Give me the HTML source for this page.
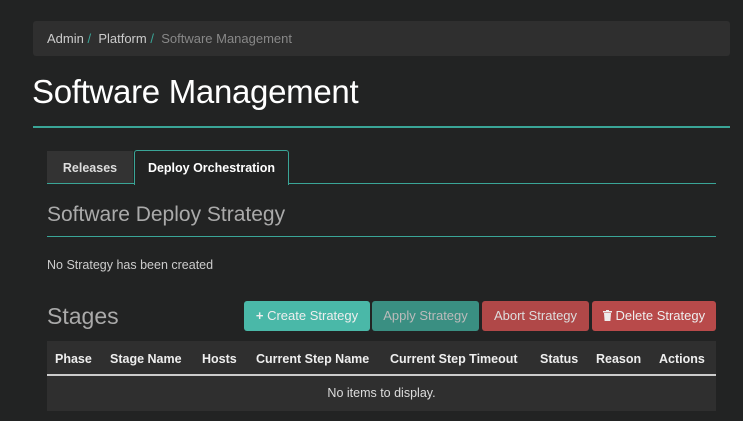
<!DOCTYPE html>
<html><head><style>
*{margin:0;padding:0;box-sizing:border-box}
body{width:743px;height:421px;background:#222323;font-family:"Liberation Sans",sans-serif;color:#ddd;position:relative;overflow:hidden}
.a{position:absolute;white-space:nowrap}
.bc{left:33px;top:21px;width:697px;height:35px;background:#2f2f2f;border-radius:3px}
.btn{position:absolute;top:301px;height:30px;border-radius:3px;font-size:13px;line-height:30px;text-align:center;color:#eee}
.h{position:absolute;top:352px;font-size:12.5px;font-weight:bold;color:#eee;white-space:nowrap}
</style></head><body>
<div class="a bc"></div>
<div class="a" style="left:47px;top:31px;font-size:13px;color:#ccc">Admin <span style="color:#3aa597">/</span>&nbsp; Platform <span style="color:#3aa597">/</span>&nbsp; <span style="color:#888">Software Management</span></div>
<div class="a" style="left:32px;top:73px;font-size:33px;color:#fff;letter-spacing:-0.3px">Software Management</div>
<div class="a" style="left:33px;top:126px;width:697px;height:2px;background:#3aa597"></div>
<div class="a" style="left:47px;top:151px;width:86px;height:32px;background:#333;font-size:12.5px;font-weight:bold;line-height:34px;text-align:center;color:#ddd">Releases</div>
<div class="a" style="left:134px;top:150px;width:155px;height:35px;background:#222323;border:1px solid #3aa597;border-bottom:none;border-radius:3px 3px 0 0;font-size:12.5px;font-weight:bold;line-height:35px;text-align:center;color:#fff">Deploy Orchestration</div>
<div class="a" style="left:47px;top:183px;width:87px;height:1px;background:#3aa597"></div>
<div class="a" style="left:288px;top:183px;width:428px;height:1px;background:#3aa597"></div>
<div class="a" style="left:47px;top:203px;font-size:21px;color:#aaa">Software Deploy Strategy</div>
<div class="a" style="left:47px;top:236px;width:669px;height:1px;background:#3aa597"></div>
<div class="a" style="left:47px;top:258px;font-size:12.5px;color:#ccc">No Strategy has been created</div>
<div class="a" style="left:47px;top:303px;font-size:23px;color:#aaa">Stages</div>
<div class="btn" style="left:244px;width:126px;background:#4ab8a8"><b>+</b> Create Strategy</div>
<div class="btn" style="left:372px;width:107px;background:#3a8f82;color:#bbb">Apply Strategy</div>
<div class="btn" style="left:482px;width:107px;background:#b04848;color:#ddd">Abort Strategy</div>
<div class="btn" style="left:592px;width:124px;background:#b84a4a"><svg width="9" height="11" viewBox="0 0 9 11" style="vertical-align:-1px"><rect x="0" y="1" width="9" height="1.5" fill="#eee"/><rect x="3" y="0" width="3" height="1.5" fill="#eee"/><path d="M1 3h7l-.6 8H1.6z" fill="#eee"/></svg> Delete Strategy</div>
<div class="a" style="left:47px;top:341px;width:669px;height:70px;background:#2f2f2f"></div>
<div class="a" style="left:47px;top:374px;width:669px;height:2px;background:#ccc"></div>
<div class="h" style="left:55px">Phase</div>
<div class="h" style="left:110px">Stage Name</div>
<div class="h" style="left:202px">Hosts</div>
<div class="h" style="left:256px">Current Step Name</div>
<div class="h" style="left:390px">Current Step Timeout</div>
<div class="h" style="left:540px">Status</div>
<div class="h" style="left:596px">Reason</div>
<div class="h" style="left:659px">Actions</div>
<div class="a" style="left:47px;top:386px;width:669px;text-align:center;font-size:12.5px;color:#ddd">No items to display.</div>
</body></html>
